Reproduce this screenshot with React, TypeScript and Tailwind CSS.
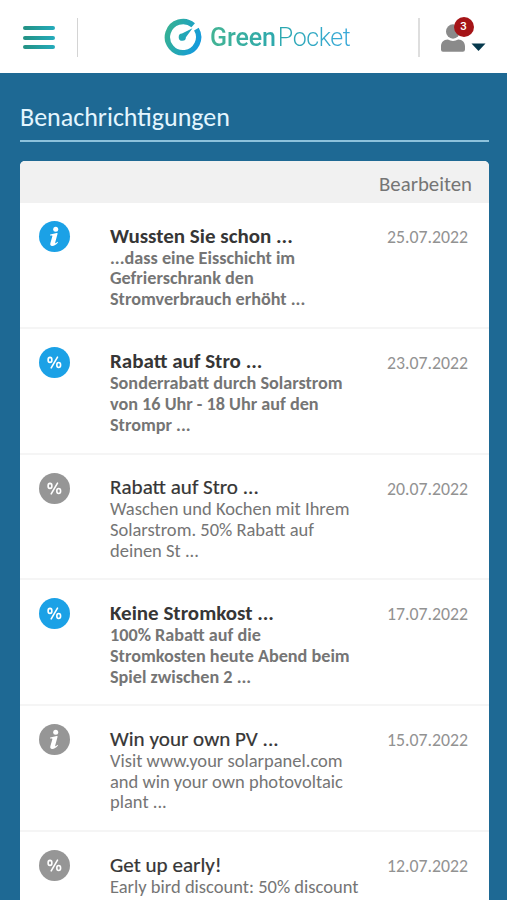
type Kind = "info" | "percent";

interface Note {
  kind: Kind;
  unread: boolean;
  title: string;
  lines: string[];
  date: string;
}

const notes: Note[] = [
  { kind: "info", unread: true, title: "Wussten Sie schon ...", lines: ["...dass eine Eisschicht im", "Gefrierschrank den", "Stromverbrauch erhöht ..."], date: "25.07.2022" },
  { kind: "percent", unread: true, title: "Rabatt auf Stro ...", lines: ["Sonderrabatt durch Solarstrom", "von 16 Uhr - 18 Uhr auf den", "Strompr ..."], date: "23.07.2022" },
  { kind: "percent", unread: false, title: "Rabatt auf Stro ...", lines: ["Waschen und Kochen mit Ihrem", "Solarstrom. 50% Rabatt auf", "deinen St ..."], date: "20.07.2022" },
  { kind: "percent", unread: true, title: "Keine Stromkost ...", lines: ["100% Rabatt auf die", "Stromkosten heute Abend beim", "Spiel zwischen 2 ..."], date: "17.07.2022" },
  { kind: "info", unread: false, title: "Win your own PV ...", lines: ["Visit www.your solarpanel.com", "and win your own photovoltaic", "plant ..."], date: "15.07.2022" },
  { kind: "percent", unread: false, title: "Get up early!", lines: ["Early bird discount: 50% discount"], date: "12.07.2022" },
];

function InfoGlyph() {
  return (
    <svg viewBox="0 0 31 31" className="size-[31px]" fill="#fff">
      <circle cx="16.7" cy="8.2" r="2.5" />
      <path d="M11.2 13.5 L17.7 12.1 C18.4 12 18.7 12.4 18.5 13.1 L16.2 21.5 C16 22.3 16.5 22.5 17.1 22 L18.4 20.8 L19 21.5 C17.2 23.9 15 25.1 13.1 25 C11.4 24.9 10.9 23.7 11.4 22 L13.3 15.5 C13.5 14.8 13.3 14.5 12.6 14.5 L11 14.5 Z" />
    </svg>
  );
}

function PercentGlyph() {
  return (
    <svg viewBox="0 0 31 31" className="size-[31px]" fill="none" stroke="#fff" strokeLinecap="round">
      <ellipse cx="11" cy="12.9" rx="1.9" ry="2.5" strokeWidth="1.6" />
      <ellipse cx="19.7" cy="18" rx="1.9" ry="2.5" strokeWidth="1.6" />
      <path d="M18.5 10.1 L12.2 20.9" strokeWidth="1.6" />
    </svg>
  );
}

function Row({ note }: { note: Note }) {
  return (
    <li className="flex h-[125.8px] border-b-2 border-[#f5f5f5] pt-[18px] pl-[19px] pr-[21px]">
      <span className={`size-[31px] shrink-0 rounded-full ${note.unread ? "bg-[#1ba1e6]" : "bg-[#969696]"}`}>
        {note.kind === "info" ? <InfoGlyph /> : <PercentGlyph />}
      </span>
      <div className="ml-10 flex-1 whitespace-nowrap pt-[2.7px]">
        <h2 className={`text-[#363636] leading-[24px] ${note.unread ? "text-[21px] font-bold" : "text-[21.1px] font-normal [-webkit-text-stroke:0.2px_#363636]"}`}>{note.title}</h2>
        <p className={`leading-[20.8px] text-[#757575] ${note.unread ? "text-[18.2px] font-bold" : "text-[18.5px] font-normal"}`}>
          {note.lines.map((line) => (
            <span key={line} className="block">{line}</span>
          ))}
        </p>
      </div>
      <time className="pt-[5px] text-[17.8px] leading-[22px] text-[#929292]">{note.date}</time>
    </li>
  );
}

function Header() {
  return (
    <header className="flex h-[73px] shrink-0 items-center bg-white">
      <div className="ml-[23px] mt-[2px] flex w-8 flex-col gap-[5.6px]">
        <span className="h-[4px] rounded-sm bg-linear-to-r from-[#239183] to-[#25abbc]" />
        <span className="h-[4px] rounded-sm bg-linear-to-r from-[#239183] to-[#25abbc]" />
        <span className="h-[4px] rounded-sm bg-linear-to-r from-[#239183] to-[#25abbc]" />
      </div>
      <span className="ml-[22px] mt-[2px] h-[39px] w-px bg-[#d4d4d4]" />
      <div className="ml-[86px] mt-[2px] flex items-center">
        <svg viewBox="0 0 38 38" className="mb-[1px] size-[38px]">
          <defs>
            <linearGradient id="ring" gradientUnits="userSpaceOnUse" x1="3" y1="12" x2="35" y2="24">
              <stop offset="0" stopColor="#35b096" />
              <stop offset="0.55" stopColor="#22a6b8" />
              <stop offset="1" stopColor="#159bdc" />
            </linearGradient>
          </defs>
          <path d="M29.2 7.3 A15.6 15.6 0 1 0 32.4 11.1" fill="none" stroke="url(#ring)" strokeWidth="5.4" />
          <path d="M28.5 10.2 L21.9 19.2 A3.6 3.6 0 1 1 18 15.6 Z" fill="url(#ring)" />
        </svg>
        <div className="ml-[8px] flex w-[147px] whitespace-nowrap bg-linear-to-r from-[#43b494] via-[#2aa7b0] to-[#3ba9df] bg-clip-text font-[Roboto] text-[25px] leading-[32px] text-transparent">
          <span className="font-medium tracking-[-0.1px]">Green</span>
          <span className="ml-[2px] font-light tracking-[-0.45px]">Pocket</span>
        </div>
      </div>
      <span className="ml-auto mt-[2px] h-[39px] w-[2px] bg-[#dedede]" />
      <div className="relative ml-[20px] mr-[21px] h-[38px] w-[46px]">
        <svg viewBox="0 0 46 38" className="h-[38px] w-[46px]">
          <ellipse cx="13" cy="13.5" rx="7" ry="7.2" fill="#8a8a8a" />
          <path d="M1 31.7 V28.5 C1 24.5 3.5 21.6 7.8 21.6 C11 23.4 15 23.4 18.2 21.6 C22.5 21.6 25 24.5 25 28.5 V31.5 Q25 33.7 22.8 33.7 H3 Q1 33.7 1 31.7 Z" fill="#8a8a8a" />
          <path d="M31.5 25.5 H45.5 L38.5 33 Z" fill="#06394d" />
        </svg>
        <span className="absolute left-[13.5px] top-[-1px] flex size-[20px] items-center justify-center rounded-full bg-[#a51417] font-[Roboto] text-[11.5px] font-medium text-white">3</span>
      </div>
    </header>
  );
}

export default function App() {
  return (
    <div className="flex h-[900px] w-[507px] flex-col overflow-hidden bg-[#1e6994] font-[Carlito,Lato,sans-serif]">
      <Header />
      <main className="pr-[18px] pl-[20px]">
        <h1 className="h-[69px] border-b-2 border-[#8dc2dc] pt-[29px] text-[26px] leading-[30px] text-[#e4f6ff]">Benachrichtigungen</h1>
        <section className="mt-[19px] overflow-hidden rounded-t-[5px] bg-white">
          <div className="flex h-[42px] items-center justify-end bg-[#f1f1f1] pr-[17px] pt-[4px] text-[20.8px] leading-[24px] text-[#757575]">Bearbeiten</div>
          <ul>
            {notes.map((note) => (
              <Row key={note.date} note={note} />
            ))}
          </ul>
        </section>
      </main>
    </div>
  );
}
